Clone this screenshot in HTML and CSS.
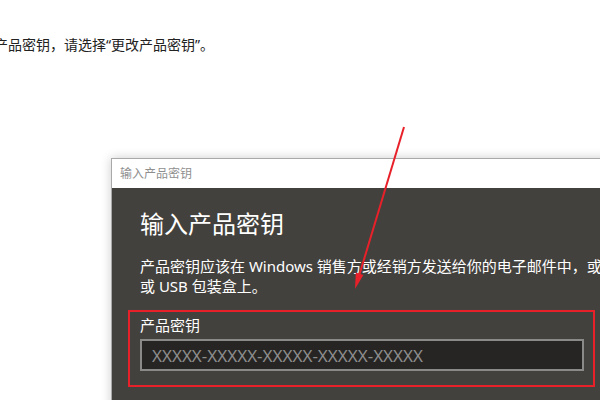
FILE: index.html
```html
<!DOCTYPE html>
<html lang="zh-CN">
<head>
<meta charset="UTF-8">
<meta name="viewport" content="width=device-width, initial-scale=1.0">
<title>输入产品密钥</title>
<link rel="stylesheet" href="styles.css">
</head>
<body>

<p class="note">产品密钥，请选择“更改产品密钥”。</p>

<div class="dialog">
  <div class="titlebar">输入产品密钥</div>
  <div class="dialog-body">
    <h1>输入产品密钥</h1>
    <p class="desc">
      <span class="line">产品密钥应该在 Windows 销售方或经销方发送给你的电子邮件中，或者位于 Windows DVD</span>
      <span class="line">或 USB 包装盒上。</span>
    </p>
    <div class="key-field">
      <label for="productKey">产品密钥</label>
      <input type="text" id="productKey" class="key-input" placeholder="XXXXX-XXXXX-XXXXX-XXXXX-XXXXX">
    </div>
  </div>
</div>

<!-- annotation arrow -->
<svg class="arrow" width="600" height="400" viewBox="0 0 600 400">
  <line x1="404" y1="127" x2="359.6" y2="274" stroke="#e8202a" stroke-width="2"/>
  <polygon points="355,289 363.4,275 355.8,272.5" fill="#e8202a"/>
</svg>

</body>
</html>
```

FILE: styles.css
```css
html, body {
  margin: 0;
  padding: 0;
}
body {
  width: 600px;
  height: 400px;
  overflow: hidden;
  position: relative;
  background-color: #fff;
  font-family: "Noto Sans", "Noto Sans CJK SC", sans-serif;
}
.note {
  margin: 35px 0 0 -6px;
  font-size: 14px;
  line-height: 20px;
  color: #222;
  white-space: nowrap;
}
.dialog {
  margin: 103px 0 0 111px;
  width: 560px;
  border: 1px solid #a9a9a9;
  box-shadow: 0 0 10px rgba(0, 0, 0, 0.2);
}
.titlebar {
  height: 29px;
  line-height: 29px;
  padding-left: 8px;
  background-color: #fff;
  color: #8f8f8f;
  font-size: 12px;
}
.dialog-body {
  background-color: #43413d;
  padding: 20px 0 40px 28px;
  color: #fff;
}
.dialog-body h1 {
  margin: 0;
  font-size: 24px;
  font-weight: normal;
  line-height: 32px;
}
.desc {
  margin: 16px 0 0;
  font-size: 15px;
  line-height: 20px;
}
.desc .line {
  display: block;
  white-space: nowrap;
}
.key-field {
  margin: 14px 0 0 -12px;
  width: 467px;
  box-sizing: border-box;
  border: 2px solid #e8202a;
  padding: 3px 9px 14px 10px;
}
.key-field label {
  display: block;
  font-size: 15px;
  line-height: 20px;
}
.key-input {
  display: block;
  margin-top: 4px;
  width: 444px;
  height: 32px;
  box-sizing: border-box;
  border: 2px solid #8a8a88;
  background-color: #262523;
  color: #ddd;
  padding: 0 10px;
  font-family: "Noto Sans", sans-serif;
  font-size: 17px;
  outline: none;
}
.key-input::placeholder {
  color: #8d8d8d;
}
.arrow {
  position: absolute;
  top: 0;
  left: 0;
  pointer-events: none;
}
```
